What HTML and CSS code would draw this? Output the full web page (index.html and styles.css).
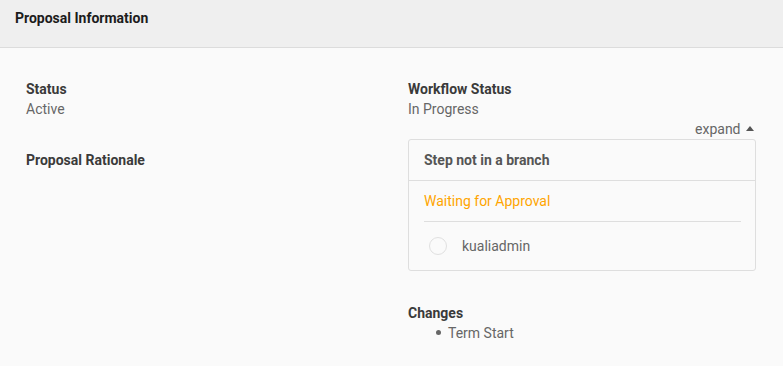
FILE: index.html
```html
<!DOCTYPE html>
<html lang="en">
<head>
    <meta charset="UTF-8">
    <title>Proposal Information</title>
    <link rel="stylesheet" href="styles.css">
</head>
<body>
    <header class="panel-header">
        <h2 class="panel-title">Proposal Information</h2>
    </header>

    <div class="panel-body">
        <div class="column">
            <div class="field">
                <div class="field-label">Status</div>
                <div class="field-value">Active</div>
            </div>
            <div class="field">
                <div class="field-label">Proposal Rationale</div>
            </div>
        </div>

        <div class="column">
            <div class="field">
                <div class="field-label">Workflow Status</div>
                <div class="field-value">In Progress</div>
            </div>
            <div class="expand-row">
                <span class="expand-link">expand <span class="caret"></span></span>
            </div>
            <div class="workflow-card">
                <div class="step-title">Step not in a branch</div>
                <div class="step-body">
                    <div class="step-status">Waiting for Approval</div>
                    <div class="approver">
                        <span class="approver-check"></span>
                        <span class="approver-name">kualiadmin</span>
                    </div>
                </div>
            </div>
            <div class="field changes">
                <div class="field-label">Changes</div>
                <ul class="change-list">
                    <li>Term Start</li>
                </ul>
            </div>
        </div>
    </div>
</body>
</html>
```

FILE: styles.css
```css
* {
    margin: 0;
    padding: 0;
    box-sizing: border-box;
}

body {
    background-color: #fafafa;
    font-family: Roboto, 'Liberation Sans', sans-serif;
    font-size: 14px;
    line-height: 20px;
    color: #666;
}

.panel-header {
    background: #efefef;
    height: 48px;
    border-bottom: 1px solid #dcdcdc;
    padding: 8px 15px 0;
}

.panel-title {
    font-size: 14px;
    font-weight: bold;
    color: #1c1c1c;
    line-height: 20px;
}

.panel-body {
    display: grid;
    grid-template-columns: 1fr 1fr;
    column-gap: 34px;
    padding: 31px 27px 0 26px;
}

.field {
    margin-bottom: 31px;
}

.field-label {
    font-weight: bold;
    color: #3a3a3a;
}

.field-value {
    color: #666;
}

.column .field:first-child {
    margin-bottom: 0;
}

.column:first-child .field:first-child {
    margin-bottom: 31px;
}

.expand-row {
    display: flex;
    justify-content: flex-end;
    padding-right: 2px;
}

.expand-link {
    color: #666;
    cursor: pointer;
}

.caret {
    display: inline-block;
    width: 0;
    height: 0;
    border-left: 4px solid transparent;
    border-right: 4px solid transparent;
    border-bottom: 5px solid #555;
    margin-left: 2px;
    vertical-align: 3px;
}

.workflow-card {
    border: 1px solid #dedede;
    border-radius: 3px;
    background: #fafafa;
    margin-bottom: 32px;
}

.step-title {
    height: 41px;
    padding: 10px 15px;
    font-weight: bold;
    color: #555;
    border-bottom: 1px solid #dedede;
}

.step-body {
    padding: 0 14px 0 15px;
}

.step-status {
    color: #ffa500;
    height: 41px;
    padding-top: 10px;
    border-bottom: 1px solid #dedede;
}

.approver {
    display: flex;
    align-items: center;
    height: 48px;
    padding-left: 5px;
}

.approver-check {
    width: 18px;
    height: 18px;
    border: 1px solid #e0e0e0;
    border-radius: 50%;
    margin-right: 15px;
}

.approver-name {
    color: #666;
}

.changes {
    margin-bottom: 0;
}

.change-list {
    list-style: none;
    padding-left: 28px;
}

.change-list li::before {
    content: '';
    display: inline-block;
    width: 5px;
    height: 5px;
    border-radius: 50%;
    background: #666;
    margin-right: 7px;
    vertical-align: 3px;
}
```
